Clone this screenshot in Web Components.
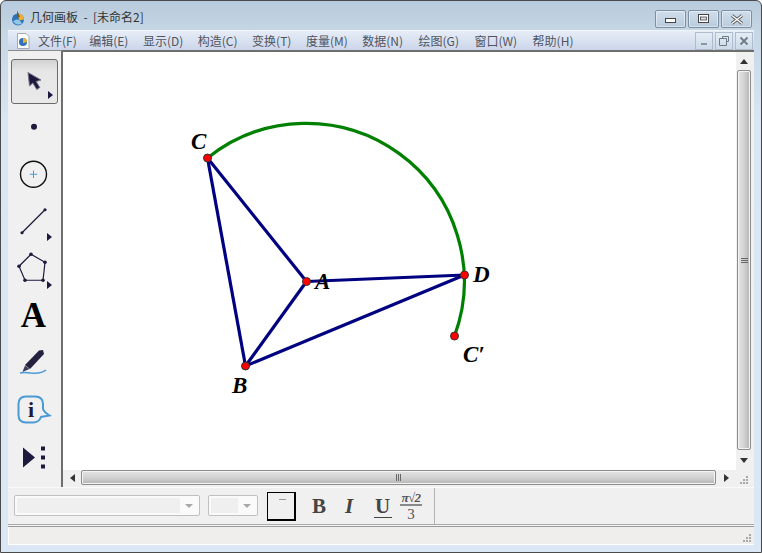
<!DOCTYPE html>
<html lang="zh">
<head>
<meta charset="utf-8">
<title>几何画板</title>
<style>
  html, body { margin: 0; height: 100%; overflow: hidden; background: #fff; }
  body { font-family: "Noto Sans CJK SC", "Liberation Sans", sans-serif; }
</style>
</head>
<body>
<app-window>
  <title-bar slot="title" caption="几何画板  -  [未命名2]"></title-bar>
  <menu-bar slot="menu"></menu-bar>
  <tool-box slot="tools">
    <tool-button selected more>
      <svg viewBox="0 0 47 46" width="47" height="46"><path d="M17 13.500 L18.500 27 L21.800 24 L25.800 30.500 L28.800 28.500 L25.200 22.500 L30 21 Z" fill="#1d1a3d" stroke="#77758a" stroke-width="1"/></svg>
    </tool-button>
    <tool-button>
      <svg viewBox="0 0 47 46" width="47" height="46"><circle cx="23" cy="21.750" r="3" fill="#1d1a3d"/></svg>
    </tool-button>
    <tool-button>
      <svg viewBox="0 0 47 46" width="47" height="46"><circle cx="22.500" cy="21.250" r="13" fill="none" stroke="#111" stroke-width="1.400"/><path d="M22.500 17.500v7.500M18.800 21.250h7.400" stroke="#4a9ad4" stroke-width="1"/></svg>
    </tool-button>
    <tool-button more>
      <svg viewBox="0 0 47 46" width="47" height="46"><path d="M11 32.750 L34 9.750" stroke="#1d1a3d" stroke-width="1.200"/><circle cx="11" cy="32.750" r="1.600" fill="#1d1a3d"/><circle cx="34" cy="9.750" r="1.600" fill="#1d1a3d"/></svg>
    </tool-button>
    <tool-button more>
      <svg viewBox="0 0 47 46" width="47" height="46"><path d="M20 6.250 L34 14.250 L32 32.250 L14 32.250 L8 18.250 Z" fill="none" stroke="#1d1a3d" stroke-width="1.200"/><g fill="#1d1a3d"><circle cx="20" cy="6.250" r="1.800"/><circle cx="34" cy="14.250" r="1.800"/><circle cx="32" cy="32.250" r="1.800"/><circle cx="14" cy="32.250" r="1.800"/><circle cx="8" cy="18.250" r="1.800"/></g></svg>
    </tool-button>
    <tool-button>
      <svg viewBox="0 0 47 46" width="47" height="46"><text x="22.500" y="31.750" text-anchor="middle" font-family="Liberation Serif" font-weight="700" font-size="35" fill="#000">A</text></svg>
    </tool-button>
    <tool-button>
      <svg viewBox="0 0 47 46" width="47" height="46"><path d="M28 7.500 L32 7 L33 11 L19 26 L14 22 Z" fill="#23213f"/><path d="M14 22.500 L18.500 26 L11.500 29 Z" fill="#3d3b5c"/><path d="M9 30 Q12 29 20 30 Q30 31 35 27" fill="none" stroke="#4a9ad4" stroke-width="1.600"/></svg>
    </tool-button>
    <tool-button>
      <svg viewBox="0 0 47 46" width="47" height="46"><path d="M15 6.500 H24 Q32 6.500 32 14 V19 Q33 22 38.500 25.500 L30 27 Q28 32.500 22 32.500 H15 Q7.500 32.500 7.500 25 V14 Q7.500 6.500 15 6.500 Z" fill="none" stroke="#4a9ad4" stroke-width="2"/><text x="20" y="26.500" text-anchor="middle" font-family="Liberation Serif" font-weight="700" font-size="22" fill="#1d1a3d">i</text></svg>
    </tool-button>
    <tool-button>
      <svg viewBox="0 0 47 46" width="47" height="46"><path d="M12 9.500 L24 19.500 L12 29.500 Z" fill="#1d1a3d"/><rect x="30" y="8.500" width="4" height="4" fill="#1d1a3d"/><rect x="30" y="17.500" width="4" height="4" fill="#1d1a3d"/><rect x="30" y="26.500" width="4" height="4" fill="#1d1a3d"/></svg>
    </tool-button>
  </tool-box>
  <sketch-canvas slot="canvas"></sketch-canvas>
  <text-palette slot="palette"></text-palette>
  <status-bar slot="status"></status-bar>
</app-window>

<script>
// outer window frame, everything else goes in its slots
class AppWindow extends HTMLElement {
  constructor() {
    super();
    this.attachShadow({ mode: "open" }).innerHTML = `
      <style>
        :host {
          display: flex;
          flex-direction: column;
          box-sizing: border-box;
          width: 762px;
          height: 553px;
          padding: 0 7px 7px;
          border: 1px solid #4a4a4a;
          border-radius: 6px 6px 0 0;
          background: linear-gradient(#b8cbdc 0, #c5d6e5 30px, #d9e6f3 120px, #dbe7f4 100%);
        }
        .work { display: flex; height: 437px; }
        .work ::slotted(tool-box) { flex: none; }
      </style>
      <slot name="title"></slot>
      <slot name="menu"></slot>
      <div class="work">
        <slot name="tools"></slot>
        <slot name="canvas"></slot>
      </div>
      <slot name="palette"></slot>
      <slot name="status"></slot>`;
  }
}

class TitleBar extends HTMLElement {
  constructor() {
    super();
    this.attachShadow({ mode: "open" }).innerHTML = `
      <style>
        :host {
          display: flex;
          align-items: center;
          height: 29px;
          flex: none;
          font-size: 12px;
          color: #333;
        }
        svg { margin: 4px 5px 0 3px; flex: none; }
        .cap { flex: 1; padding-top: 1px; white-space: pre; }
        .btns { display: flex; gap: 2px; align-self: flex-start; margin: 9px 2px 0 0; }
        .b {
          width: 29px;
          height: 16px;
          border: 1px solid #7d8fa3;
          border-radius: 2px;
          background: linear-gradient(#cfdeeb, #b9cbdc);
          box-shadow: inset 0 0 0 1px rgba(255,255,255,.45);
          display: flex;
          align-items: center;
          justify-content: center;
        }
      </style>
      <svg viewBox="0 0 14 15" width="14" height="16">
        <circle cx="7" cy="9" r="6" fill="#2f72b8"/>
        <path d="M7 3 A6 6 0 0 1 13 9 L8 10 Z" fill="#f0b030"/>
        <path d="M2 11 Q7 6 11 13 Q6 16 2 11 Z" fill="#8fc8e8"/>
        <path d="M6 0 L9 6 L6 8 Z" fill="#7a5a20"/>
      </svg>
      <span class="cap"></span>
      <div class="btns">
        <div class="b"><svg style="margin:3px 0 0" width="12" height="6"><rect x=".5" y=".5" width="10" height="4" fill="#fff" stroke="#444"/></svg></div>
        <div class="b"><svg style="margin:0" width="12" height="10"><rect x=".5" y=".5" width="10" height="8" fill="#fff" stroke="#444"/><rect x="2.500" y="3" width="6" height="3" fill="#cfdbe6" stroke="#444" stroke-width=".8"/></svg></div>
        <div class="b"><svg style="margin:0" width="14" height="11" viewBox="0 0 14 11"><path d="M2 1.500 L12 9.500 M12 1.500 L2 9.500" stroke="#555" stroke-width="3"/><path d="M2 1.500 L12 9.500 M12 1.500 L2 9.500" stroke="#fff" stroke-width="1.400"/></svg></div>
      </div>`;
    this.shadowRoot.querySelector(".cap").textContent = this.getAttribute("caption");
  }
}

// label and the gap in front of it
const MENU_ITEMS = [
  ["文件(F)", 0], ["编辑(E)", 12.5], ["显示(D)", 14.5], ["构造(C)", 14.5], ["变换(T)", 14.5],
  ["度量(M)", 14.5], ["数据(N)", 14.5], ["绘图(G)", 15.5], ["窗口(W)", 15.5], ["帮助(H)", 15.5],
];

class MenuBar extends HTMLElement {
  constructor() {
    super();
    this.attachShadow({ mode: "open" }).innerHTML = `
      <style>
        :host {
          display: flex;
          align-items: center;
          height: 20px;
          flex: none;
          box-sizing: border-box;
          padding-left: 8px;
          font-size: 12px;
          color: #50545f;
          background: linear-gradient(#e6edf7, #ccd6ea);
          border-top: 1px solid #f1f5fa;
        }
        .doc { flex: none; margin-right: 8px; }
        .items { display: flex; flex: 1; }
        .items span { white-space: nowrap; }
        .mdi { display: flex; gap: 2px; margin-right: 1px; }
        .mdi div {
          width: 16px;
          height: 16px;
          border: 1px solid #aebccd;
          background: linear-gradient(#e4edf5, #ccdae8);
          display: flex;
          align-items: center;
          justify-content: center;
        }
      </style>
      <svg class="doc" viewBox="0 0 14 16" width="14" height="16">
        <path d="M1.500 .5 H10 L13 3.500 V15.500 H1.500 Z" fill="#fff" stroke="#a8a8b0"/>
        <circle cx="7" cy="9" r="4" fill="#2f72b8"/>
        <path d="M7 5 A4 4 0 0 1 11 9 L7 10 Z" fill="#f0b030"/>
      </svg>
      <div class="items"></div>
      <div class="mdi">
        <div><svg width="10" height="10"><rect x="2" y="7" width="6" height="2" fill="#8a97a5"/></svg></div>
        <div><svg width="10" height="10"><path d="M3.500 2.500 V.5 H9.500 V5.500 H7.500 M.5 2.500 H7.500 V9.500 H.5 Z" fill="none" stroke="#6f7b88"/></svg></div>
        <div><svg width="10" height="10"><path d="M1.500 1.500 L8.500 8.500 M8.500 1.500 L1.500 8.500" stroke="#6f7b88" stroke-width="1.800"/></svg></div>
      </div>`;
    const box = this.shadowRoot.querySelector(".items");
    MENU_ITEMS.forEach(([label, gap]) => {
      const s = document.createElement("span");
      s.textContent = label;
      s.style.marginLeft = gap + "px";
      box.appendChild(s);
    });
  }
}

class ToolBox extends HTMLElement {
  constructor() {
    super();
    this.attachShadow({ mode: "open" }).innerHTML = `
      <style>
        :host {
          display: grid;
          grid-auto-rows: 47.5px;
          box-sizing: border-box;
          width: 55px;
          padding: 6px 0 0 3px;
          background: #f0f0f0;
          border-right: 2px solid #6e6e6e;
          border-top: 1px solid #8a8a8a;
        }
      </style>
      <slot></slot>`;
  }
}

class ToolButton extends HTMLElement {
  constructor() {
    super();
    this.attachShadow({ mode: "open" }).innerHTML = `
      <style>
        :host {
          display: block;
          position: relative;
          width: 47px;
          height: 46px;
          align-self: center;
          box-sizing: border-box;
        }
        :host([selected]) {
          height: 45px;
          margin-top: 1px;
          border: 1px solid #6b6b6b;
          border-radius: 3px;
          background: linear-gradient(#d2d2d2, #e6e6e6 25%, #e9e9e9);
        }
        ::slotted(svg) { display: block; }
        :host([selected]) ::slotted(svg) { margin: -1px; }
        .more {
          display: none;
          position: absolute;
          right: 6px;
          bottom: 5px;
          width: 0;
          height: 0;
          border-left: 5px solid #1d1a3d;
          border-top: 4px solid transparent;
          border-bottom: 4px solid transparent;
        }
        :host([more]) .more { display: block; }
        :host([selected]) .more { right: 4px; bottom: 4px; }
      </style>
      <slot></slot>
      <span class="more"></span>`;
  }
}

// points as read from the reference, in window coordinates minus the canvas origin
const ORIGIN = { x: 63, y: 52 };
const PTS = {
  A: [306.5, 281.5],
  B: [245.5, 366],
  C: [207.5, 158],
  D: [464.5, 275],
  E: [454.5, 336],
};
const SEGMENTS = ["CA", "CB", "AB", "AD", "BD"];
const LABELS = [
  ["C", 191, 149],
  ["A", 315, 289],
  ["D", 473, 282],
  ["B", 232, 393],
  ["C′", 463, 362],
];

class SketchCanvas extends HTMLElement {
  constructor() {
    super();
    const p = (k) => [PTS[k][0] - ORIGIN.x, PTS[k][1] - ORIGIN.y];
    const segs = SEGMENTS.map((s) => {
      const [a, b] = [p(s[0]), p(s[1])];
      return `<line x1="${a[0]}" y1="${a[1]}" x2="${b[0]}" y2="${b[1]}"/>`;
    }).join("");
    const dots = Object.keys(PTS).map((k) => {
      const c = p(k);
      return `<circle cx="${c[0]}" cy="${c[1]}" r="4"/>`;
    }).join("");
    const labels = LABELS.map((l) => `<text x="${l[1] - ORIGIN.x}" y="${l[2] - ORIGIN.y}">${l[0]}</text>`).join("");
    const c = p("C"), e = p("E");
    this.attachShadow({ mode: "open" }).innerHTML = `
      <style>
        :host {
          display: grid;
          grid-template-columns: 1fr 18px;
          grid-template-rows: 1fr 17px;
          flex: 1;
          min-width: 0;
          border-top: 2px solid #6e6e6e;
          background: #f0f0f0;
        }
        .paper { background: #fff; overflow: hidden; }
        svg { display: block; }
        .segs line { stroke: #000080; stroke-width: 3.2; }
        .dots circle { fill: #f00; stroke: #333; stroke-width: 1; }
        text { font: italic 700 23px "Liberation Serif", serif; fill: #000; }
        .grip { background: #f0f0f0; display: flex; align-items: flex-end; justify-content: flex-end; padding: 0 6px 3px 0; box-sizing: border-box; }
      </style>
      <div class="paper">
        <svg width="673" height="418" viewBox="0 0 673 418">
          <path d="M${c[0]} ${c[1]} A158 158 0 0 1 ${e[0]} ${e[1]}" fill="none" stroke="#008000" stroke-width="3.2"/>
          <g class="segs">${segs}</g>
          <g class="dots">${dots}</g>
          ${labels}
        </svg>
      </div>
      <scroll-bar vertical></scroll-bar>
      <scroll-bar></scroll-bar>
      <div class="grip"><svg width="9" height="9" fill="#a8a8a8"><rect x="7" y="1" width="2" height="2"/><rect x="4" y="4" width="2" height="2"/><rect x="7" y="4" width="2" height="2"/><rect x="1" y="7" width="2" height="2"/><rect x="4" y="7" width="2" height="2"/><rect x="7" y="7" width="2" height="2"/></svg></div>`;
  }
}

class ScrollBar extends HTMLElement {
  constructor() {
    super();
    const v = this.hasAttribute("vertical");
    const back = v ? "M0 5 L4 0 L8 5 Z" : "M5 0 L0 4 L5 8 Z";
    const fwd = v ? "M0 0 H8 L4 5 Z" : "M0 0 L5 4 L0 8 Z";
    const size = v ? 'width="8" height="5" viewBox="0 0 8 5"' : 'width="5" height="8" viewBox="0 0 5 8"';
    this.attachShadow({ mode: "open" }).innerHTML = `
      <style>
        :host {
          display: flex;
          flex-direction: ${v ? "column" : "row"};
          align-items: stretch;
          background: #f0f0f0;
        }
        .arrow {
          flex: none;
          ${v ? "height: 18px; padding-right: 2px" : "width: 18px; padding-bottom: 2px"};
          display: flex;
          align-items: center;
          justify-content: center;
        }
        .arrow.end { ${v ? "height: 20px" : "width: 20px"}; }
        .thumb {
          flex: 1;
          box-sizing: border-box;
          ${v ? "margin: 0 3px 0 1px" : "margin: 0 0 2px"};
          border: 1px solid #8c8c8c;
          border-radius: 2px;
          box-shadow: inset 0 0 0 1px #f4f4f4;
          background: linear-gradient(${v ? "to right" : "to bottom"}, #e4e4e4, #d2d2d2 50%, #b4b4b4);
          display: flex;
          align-items: center;
          justify-content: center;
        }
        .grip { display: flex; gap: 1px; flex-direction: ${v ? "column" : "row"}; }
        .grip i { display: block; background: #666; ${v ? "width: 7px; height: 1px" : "width: 1px; height: 7px"}; }
      </style>
      <div class="arrow"><svg ${size}><path d="${back}" fill="#333"/></svg></div>
      <div class="thumb"><div class="grip"><i></i><i></i><i></i></div></div>
      <div class="arrow end"><svg ${size}><path d="${fwd}" fill="#333"/></svg></div>`;
  }
}

class TextPalette extends HTMLElement {
  constructor() {
    super();
    this.attachShadow({ mode: "open" }).innerHTML = `
      <style>
        :host {
          display: flex;
          align-items: center;
          flex: none;
          box-sizing: border-box;
          height: 38px;
          padding: 0 0 0 6px;
          background: #f0f0f0;
          border-top: 1px solid #fafafa;
          border-bottom: 1px solid #aaa;
          font-family: "Liberation Serif", serif;
          color: #444;
        }
        .sel {
          box-sizing: border-box;
          height: 21px;
          padding: 2px;
          border: 1px solid #c0c0c0;
          border-radius: 2px;
          background: #fafafa;
          display: flex;
          align-items: center;
          margin: 0 8px 1px 0;
        }
        .sel .f { height: 100%; background: #efefef; }
        .sel .a { flex: 1; display: flex; justify-content: center; }
        .sel .a::after {
          content: "";
          border-top: 4px solid #a8a8a8;
          border-left: 4px solid transparent;
          border-right: 4px solid transparent;
        }
        .color {
          box-sizing: border-box;
          width: 29px;
          height: 29px;
          margin: 0 16px 0 1px;
          background: #f0f0f0;
          border: 1px solid #000;
          border-right-width: 2px;
          border-bottom-width: 2px;
          position: relative;
        }
        .color::after {
          content: "";
          position: absolute;
          top: 6px;
          right: 8px;
          width: 7px;
          height: 1px;
          background: #999;
        }
        b, i, u { font-size: 21px; line-height: 21px; display: block; }
        b { width: 14px; text-align: center; }
        .i { margin-left: 18px; width: 10px; text-align: center; font-weight: 700; }
        u {
          align-self: flex-start;
          margin: 7.5px 0 0 19.5px;
          width: 18px;
          text-align: center;
          font-weight: 700;
          text-decoration: none;
          border-bottom: 1px solid #444;
        }
        .frac {
          margin: 1px 0 0 8.5px;
          width: 22px;
          text-align: center;
          font: 400 15px/14px "Liberation Serif", serif;
          color: #555;
        }
        .frac div:first-child {
          border-bottom: 2px solid #888;
          margin-bottom: 1px;
          font: italic 700 13px/12px "Liberation Serif", serif;
          letter-spacing: -.5px;
          white-space: nowrap;
        }
        .sep { width: 1px; height: 36px; margin-left: 12px; background: #b4b4b4; }
      </style>
      <div class="sel" style="width:186px"><div class="f" style="width:163px"></div><div class="a"></div></div>
      <div class="sel" style="width:50px"><div class="f" style="width:27px"></div><div class="a"></div></div>
      <div class="color"></div>
      <b>B</b>
      <i class="i">I</i>
      <u>U</u>
      <div class="frac"><div>π√2</div><div>3</div></div>
      <div class="sep"></div>`;
  }
}

class StatusBar extends HTMLElement {
  constructor() {
    super();
    this.attachShadow({ mode: "open" }).innerHTML = `
      <style>
        :host {
          display: flex;
          flex: none;
          align-items: flex-end;
          justify-content: flex-end;
          box-sizing: border-box;
          height: 20px;
          padding: 0 3px 2px 0;
          background: #f0eded;
          border-top: 1px solid #f4f4f4;
          border-bottom: 1px solid #fff;
          box-shadow: inset 0 1px 0 #9a9a9a, inset 1px 0 0 #fff;
        }
      </style>
      <svg width="9" height="9" fill="#a8a8a8"><rect x="7" y="1" width="2" height="2"/><rect x="4" y="4" width="2" height="2"/><rect x="7" y="4" width="2" height="2"/><rect x="1" y="7" width="2" height="2"/><rect x="4" y="7" width="2" height="2"/><rect x="7" y="7" width="2" height="2"/></svg>`;
  }
}

customElements.define("app-window", AppWindow);
customElements.define("title-bar", TitleBar);
customElements.define("menu-bar", MenuBar);
customElements.define("tool-box", ToolBox);
customElements.define("tool-button", ToolButton);
customElements.define("sketch-canvas", SketchCanvas);
customElements.define("scroll-bar", ScrollBar);
customElements.define("text-palette", TextPalette);
customElements.define("status-bar", StatusBar);
</script>
</body>
</html>
